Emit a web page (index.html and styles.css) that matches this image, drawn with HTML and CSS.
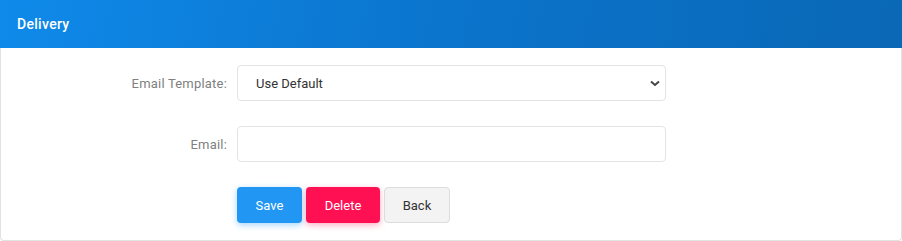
FILE: index.html
```html
<!DOCTYPE html>
<html>

<head>
    <meta charset="UTF-8">
    <title>Delivery</title>

    <link rel="stylesheet" href="styles.css">
</head>

<body>
<div class="card">
    <div class="card-header">
        <h3>Delivery</h3>
    </div>

    <div class="card-body">
        <form class="form-grid">
            <label for="email-template">Email Template:</label>
            <select id="email-template" class="form-control">
                <option>Use Default</option>
            </select>

            <label for="email">Email:</label>
            <input type="text" id="email" class="form-control">

            <div></div>
            <div class="button-group">
                <button type="button" class="btn btn-save">Save</button>
                <button type="button" class="btn btn-delete">Delete</button>
                <button type="button" class="btn btn-back">Back</button>
            </div>
        </form>
    </div>
</div>
</body>

</html>
```

FILE: styles.css
```css
body {
    margin: 0;
    font-family: Roboto, "Liberation Sans", sans-serif;
    font-size: 13px;
    color: #333;
}

.card {
    width: 902px;
    height: 241px;
    box-sizing: border-box;
    border: 1px solid #e2e2e2;
    border-top: none;
    border-radius: 0 0 4px 4px;
    background: #fff;
}

.card-header {
    height: 48px;
    margin: 0 -1px;
    padding-left: 17px;
    display: flex;
    align-items: center;
    background: linear-gradient(100deg, #0f8aea 0%, #0b74cc 50%, #0a68b6 100%);
}

.card-header h3 {
    margin: 0;
    margin-top: -1px;
    font-size: 14px;
    font-weight: 500;
    color: #fff;
    letter-spacing: 0.3px;
}

.card-body {
    padding-top: 17px;
}

.form-grid {
    display: grid;
    grid-template-columns: 226px 429px;
    column-gap: 10px;
    row-gap: 25px;
    align-items: center;
}

.form-grid label {
    text-align: right;
    color: #808080;
    letter-spacing: 0.2px;
}

.form-control {
    box-sizing: border-box;
    width: 100%;
    height: 36px;
    border: 1px solid #e3e3e3;
    border-radius: 4px;
    background: #fff;
    font-family: inherit;
    font-size: 13px;
    color: #333;
    padding: 0 12px;
}

select.form-control {
    appearance: none;
    padding-left: 18px;
    background-image: url("data:image/svg+xml,%3Csvg xmlns='http://www.w3.org/2000/svg' width='10' height='7' viewBox='0 0 10 7'%3E%3Cpath d='M1 1.5l4 3.5 4-3.5' fill='none' stroke='%23444' stroke-width='2'/%3E%3C/svg%3E");
    background-repeat: no-repeat;
    background-position: right 5px center;
}

.button-group {
    display: flex;
    gap: 4px;
}

.btn {
    height: 36px;
    border: 1px solid transparent;
    border-radius: 4px;
    font-family: inherit;
    font-size: 13px;
    padding: 0;
}

.btn-save {
    width: 65px;
    background: #2196f3;
    color: #fff;
    box-shadow: 0 2px 6px rgba(33, 150, 243, 0.4);
}

.btn-delete {
    width: 74px;
    background: #ff1053;
    color: #fff;
    box-shadow: 0 2px 6px rgba(255, 16, 83, 0.35);
}

.btn-back {
    width: 66px;
    background: #f3f3f3;
    border-color: #dcdcdc;
    color: #333;
}
```
